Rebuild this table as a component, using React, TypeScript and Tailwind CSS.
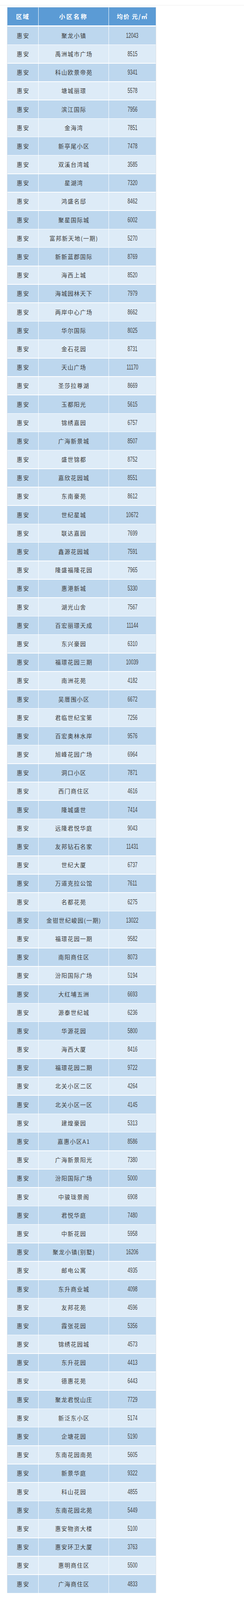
import React from 'react';

// sizes below are the reference's pixels divided by 1.25 (the shot comes out at 125%)

const rows: [string, string][] = [
  ['聚龙小镇', '12043'],
  ['禹洲城市广场', '8515'],
  ['科山欧景帝苑', '9341'],
  ['塘城丽璟', '5578'],
  ['滨江国际', '7956'],
  ['金海湾', '7851'],
  ['新亭尾小区', '7478'],
  ['双溪台湾城', '3585'],
  ['星湖湾', '7320'],
  ['鸿盛名邸', '8462'],
  ['聚星国际城', '6002'],
  ['富邦新天地(一期)', '5270'],
  ['新新蓝郡国际', '8769'],
  ['海西上城', '8520'],
  ['海城园林天下', '7979'],
  ['两岸中心广场', '8662'],
  ['华尔国际', '8025'],
  ['金石花园', '8731'],
  ['天山广场', '11170'],
  ['圣莎拉尊湖', '8669'],
  ['玉都阳光', '5615'],
  ['锦绣嘉园', '6757'],
  ['广海新景城', '8507'],
  ['盛世锦都', '8752'],
  ['嘉欣花园城', '8551'],
  ['东南豪苑', '8612'],
  ['世纪星城', '10672'],
  ['联达嘉园', '7699'],
  ['鑫源花园城', '7591'],
  ['隆盛福隆花园', '7965'],
  ['惠港新城', '5330'],
  ['湖光山舍', '7567'],
  ['百宏丽璟天成', '11144'],
  ['东兴豪园', '6310'],
  ['福璟花园三期', '10039'],
  ['南洲花苑', '4182'],
  ['吴厝围小区', '6672'],
  ['君临世纪宝第', '7256'],
  ['百宏奥林水岸', '9576'],
  ['旭峰花园广场', '6964'],
  ['洞口小区', '7871'],
  ['西门商住区', '4616'],
  ['隆城盛世', '7414'],
  ['远隆君悦华庭', '9043'],
  ['友邦钻石名家', '11431'],
  ['世纪大厦', '6737'],
  ['万道克拉公馆', '7611'],
  ['名都花苑', '6275'],
  ['金钳世纪峻园(一期)', '13022'],
  ['福璟花园一期', '9582'],
  ['南阳商住区', '8073'],
  ['汾阳国际广场', '5194'],
  ['大红埔五洲', '6693'],
  ['源泰世纪城', '6236'],
  ['华源花园', '5800'],
  ['海西大厦', '8416'],
  ['福璟花园二期', '9722'],
  ['北关小区二区', '4264'],
  ['北关小区一区', '4145'],
  ['建煌豪园', '5313'],
  ['嘉惠小区A1', '8586'],
  ['广海新景阳光', '7380'],
  ['汾阳国际广场', '5000'],
  ['中骏珑景阁', '6908'],
  ['君悦华庭', '7480'],
  ['中新花园', '5958'],
  ['聚龙小镇(别墅)', '16206'],
  ['邮电公寓', '4935'],
  ['东升商业城', '4098'],
  ['友邦花苑', '4596'],
  ['霞张花园', '5356'],
  ['锦绣花园城', '4573'],
  ['东升花园', '4413'],
  ['德惠花苑', '6443'],
  ['聚龙君悦山庄', '7729'],
  ['新泛东小区', '5174'],
  ['企塘花园', '5190'],
  ['东南花园南苑', '5605'],
  ['新景华庭', '9322'],
  ['科山花园', '4855'],
  ['东南花园北苑', '5449'],
  ['惠安物资大楼', '5100'],
  ['惠安环卫大厦', '3763'],
  ['惠明商住区', '5500'],
  ['广海商住区', '4833'],
];

const Row: React.FC<{ name: string; price: string; dark: boolean }> = ({ name, price, dark }) => {
  const bg = dark ? 'bg-[#bdd7ee]' : 'bg-[#ddebf7]';
  return (
    <div className="flex h-[45.6px] gap-x-px leading-none">
      <div className={`flex w-[78.4px] shrink-0 items-center justify-center pl-[2px] text-[14.4px] tracking-[2.4px] text-[#3a3a3a] ${bg}`}>
        惠安
      </div>
      <div className={`flex w-[179.2px] shrink-0 items-center justify-center pl-[1.6px] text-[14.4px] tracking-[1.6px] text-[#3a3a3a] ${bg}`}>
        {name}
      </div>
      <div className={`flex w-[120px] shrink-0 items-center justify-center ${bg}`}>
        <span className="inline-block scale-x-[0.62] font-['Liberation_Sans',sans-serif] text-[18.4px] text-[#444]">
          {price}
        </span>
      </div>
    </div>
  );
};

const App: React.FC = () => {
  return (
    <div className="min-h-screen w-full bg-white font-['Noto_Sans_CJK_SC',sans-serif]">
      <div className="h-[13.6px] border-b border-[#eeeeee]" />

      <div className="ml-[18.4px] mt-[4px] w-[381.6px] border-x border-t border-[#dde1e6] bg-white">
        {/* header */}
        <div className="flex h-[46.4px] gap-x-px leading-none">
          <div className="flex w-[78.4px] shrink-0 items-center justify-center bg-[#5b9bd5] text-[15.2px] font-bold tracking-[2.4px] text-white">
            区域
          </div>
          <div className="flex w-[179.2px] shrink-0 items-center justify-center bg-[#5b9bd5] text-[15.2px] font-bold tracking-[3.2px] text-white">
            小区名称
          </div>
          <div className="flex w-[120px] shrink-0 items-center justify-center bg-[#5b9bd5] text-[15.2px] font-bold tracking-[1.6px] text-white">
            均价 元/㎡
          </div>
        </div>

        <div className="mt-[3.2px] flex flex-col gap-[1.6px]">
          {rows.map(([name, price], i) => (
            <Row key={i} name={name} price={price} dark={i % 2 === 0} />
          ))}
        </div>
      </div>
    </div>
  );
};

export default App;
